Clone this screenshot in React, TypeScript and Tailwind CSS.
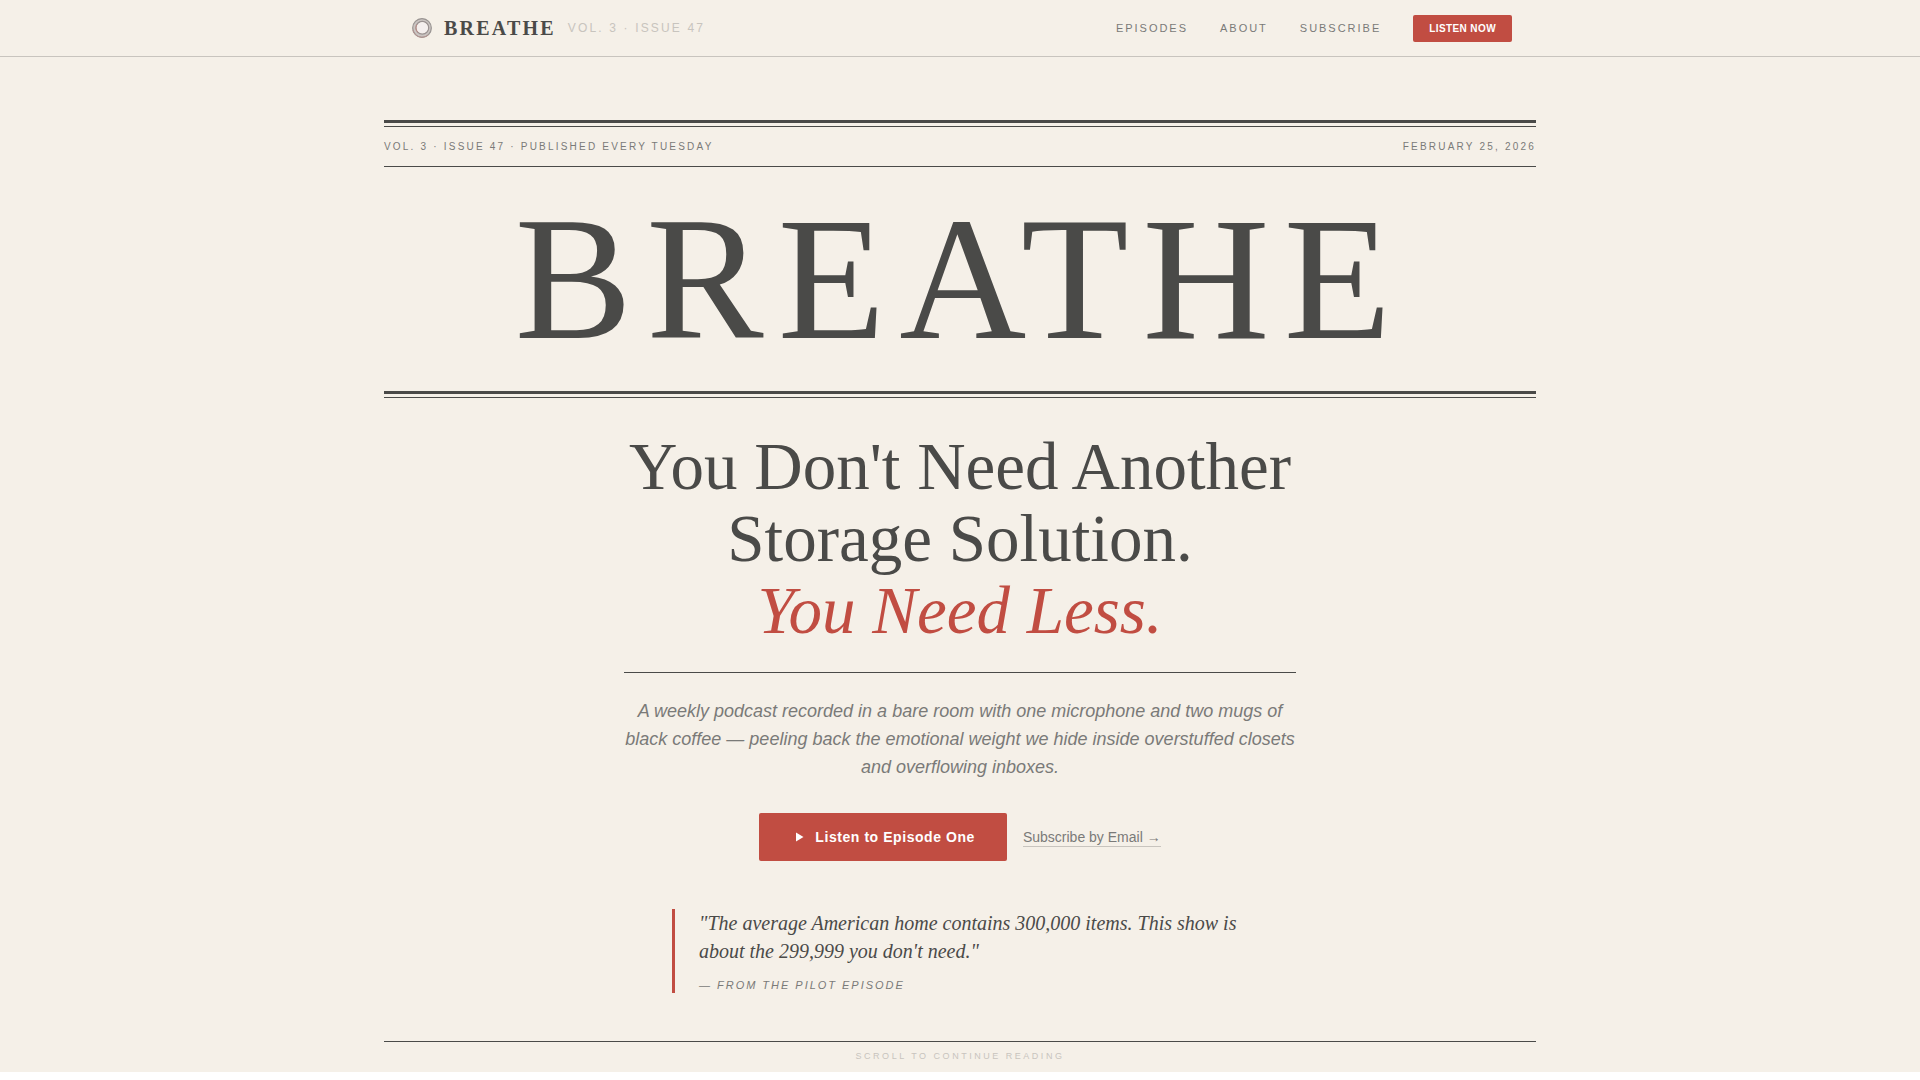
import React from "react";

const navLinks = [
  { label: "Episodes", href: "#episodes" },
  { label: "About", href: "#about" },
  { label: "Subscribe", href: "#subscribe" },
];

function Logo() {
  return (
    <svg width="28" height="28" viewBox="0 0 28 28" fill="none" aria-hidden="true">
      <circle cx="14" cy="14" r="8" stroke="#cbc5c2" strokeWidth="3.4" />
      <circle cx="14" cy="14" r="9.3" stroke="#9a9593" strokeWidth="1.2" />
      <circle cx="14.3" cy="13.7" r="6.4" stroke="#9a9292" strokeWidth="1.3" />
      <path d="M5 16a9.2 9.2 0 0 0 15 5" stroke="#b5928e" strokeWidth="0.9" />
      <path d="M9 10.5a6 6 0 0 0 1 8" stroke="#c08a82" strokeWidth="0.9" />
      <circle cx="14.3" cy="13.7" r="5.4" fill="#f4efee" />
    </svg>
  );
}

function DoubleRule() {
  return (
    <div className="h-[7px] border-t-[3px] border-b border-[#4a4a48]" />
  );
}

function Nav() {
  return (
    <nav className="border-b border-[#c8c4be]">
      <div className="max-w-6xl mx-auto h-14 px-6 flex items-center justify-between">
        <div className="flex items-center gap-3">
          <a href="#top" className="flex items-center gap-2">
            <Logo />
            <span className="font-['Liberation_Serif',serif] text-xl font-bold tracking-[0.11em]">
              BREATHE
            </span>
          </a>
          <span className="text-xs tracking-[0.18em] text-[#c8c4be]">
            VOL. 3 · ISSUE 47
          </span>
        </div>
        <div className="flex items-center gap-8">
          {navLinks.map((link) => (
            <a
              key={link.label}
              href={link.href}
              className="text-[11px] uppercase tracking-[0.18em] text-[#7a7a78]"
            >
              {link.label}
            </a>
          ))}
          <button className="bg-[#c14d42] text-white text-[10px] leading-[15px] font-bold uppercase tracking-[0.04em] px-4 py-1.5 rounded-xs">
            Listen Now
          </button>
        </div>
      </div>
    </nav>
  );
}

function Masthead() {
  return (
    <header>
      <DoubleRule />
      <div className="h-10 flex items-center justify-between border-b border-[#4a4a48] text-[10px] uppercase tracking-[0.22em] text-[#7a7a78]">
        <span>Vol. 3 · Issue 47 · Published Every Tuesday</span>
        <span>February 25, 2026</span>
      </div>
      <h1 className="py-6 text-center font-['Liberation_Serif',serif] text-[176px] leading-none tracking-[0.08em]">
        BREATHE
      </h1>
      <DoubleRule />
    </header>
  );
}

export default function App() {
  return (
    <div
      id="top"
      className="bg-[#f5f0e8] text-[#4a4a48] font-['Liberation_Sans',sans-serif]"
    >
      <Nav />
      <main className="max-w-6xl mx-auto pt-[63px]">
        <Masthead />

        <section className="max-w-2xl mx-auto pt-8 pb-12">
          <h2 className="pb-[26px] border-b border-[#4a4a48] text-center font-['Liberation_Serif',serif] text-[67px] leading-[72px]">
            You Don't Need Another Storage Solution.
            <em className="block text-[#c14d42]">You Need Less.</em>
          </h2>
          <p className="mt-6 text-center text-lg leading-7 italic text-[#7a7a78]">
            A weekly podcast recorded in a bare room with one microphone and two
            mugs of black coffee — peeling back the emotional weight we hide
            inside overstuffed closets and overflowing inboxes.
          </p>

          <div className="mt-8 flex items-center justify-center gap-4">
            <button className="h-12 px-8 flex items-center gap-2 rounded-xs bg-[#c14d42] text-white text-sm font-bold tracking-[0.04em]">
              <svg width="16" height="16" viewBox="0 0 16 16" fill="currentColor" aria-hidden="true">
                <path d="M5 3.5v9l7.5-4.5z" />
              </svg>
              Listen to Episode One
            </button>
            <a
              href="#subscribe"
              className="text-sm leading-[18px] text-[#7a7a78] border-b border-[#c8c4be]"
            >
              Subscribe by Email →
            </a>
          </div>

          <blockquote className="mt-12 mx-12 pl-6 border-l-[3px] border-[#c14d42] italic">
            <p className="font-['Liberation_Serif',serif] text-xl leading-7">
              "The average American home contains 300,000 items. This show is
              about the 299,999 you don't need."
            </p>
            <cite className="mt-3 block text-[11px] leading-4 uppercase tracking-[0.18em] text-[#7a7a78]">
              — From the pilot episode
            </cite>
          </blockquote>
        </section>

        <div className="border-t border-[#4a4a48] pt-2 pb-2.5 text-center text-[9px] leading-3 uppercase tracking-[0.28em] text-[#c8c4be]">
          Scroll to continue reading
        </div>
      </main>
    </div>
  );
}
